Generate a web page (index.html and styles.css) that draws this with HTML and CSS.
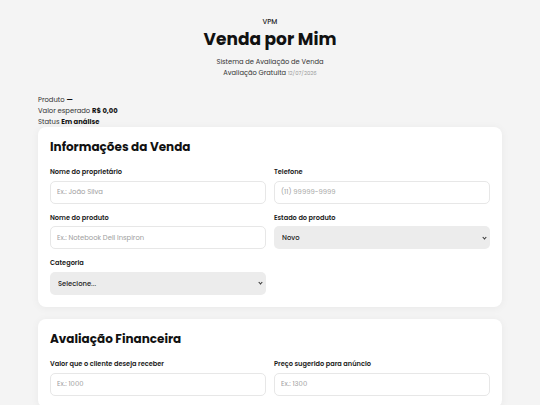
FILE: index.html
```html
<!DOCTYPE html>
<html lang="pt-BR">
<head>
<meta charset="utf-8">
<title>Venda por Mim</title>
<link rel="stylesheet" href="styles.css">
</head>
<body>
<div class="page">
  <header class="hero">
    <div class="brand">VPM</div>
    <h1 class="title">Venda por Mim</h1>
    <p class="subtitle first">Sistema de Avaliação de Venda</p>
    <p class="subtitle">Avaliação Gratuita <span class="date">12/07/2026</span></p>
  </header>

  <div class="summary">
    <div>Produto <b>—</b></div>
    <div>Valor esperado <b>R$ 0,00</b></div>
    <div>Status <b>Em análise</b></div>
  </div>

  <section class="card">
    <h2 class="card-title">Informações da Venda</h2>
    <div class="grid">
      <div class="field">
        <label class="label">Nome do proprietário</label>
        <input class="input" type="text" placeholder="Ex.: João Silva">
      </div>
      <div class="field">
        <label class="label">Telefone</label>
        <input class="input" type="text" placeholder="(11) 99999-9999">
      </div>
      <div class="field">
        <label class="label">Nome do produto</label>
        <input class="input" type="text" placeholder="Ex.: Notebook Dell Inspiron">
      </div>
      <div class="field">
        <label class="label">Estado do produto</label>
        <div class="select-wrap"><select class="select"><option>Novo</option></select></div>
      </div>
      <div class="field">
        <label class="label">Categoria</label>
        <div class="select-wrap"><select class="select"><option>Selecione...</option></select></div>
      </div>
    </div>
  </section>

  <section class="card">
    <h2 class="card-title">Avaliação Financeira</h2>
    <div class="grid">
      <div class="field">
        <label class="label">Valor que o cliente deseja receber</label>
        <input class="input" type="text" placeholder="Ex.: 1000">
      </div>
      <div class="field">
        <label class="label">Preço sugerido para anúncio</label>
        <input class="input" type="text" placeholder="Ex.: 1300">
      </div>
    </div>
  </section>
</div>
</body>
</html>
```

FILE: styles.css
```css
* { box-sizing: border-box; }
html, body { margin: 0; padding: 0; }
body {
  background: #f4f4f4;
  font-family: "Poppins", "Inter", "Noto Sans", sans-serif;
  color: #151515;
}
.page {
  width: 464px;
  margin: 0 auto;
}
.hero {
  text-align: center;
  padding-top: 17px;
}
.brand {
  font-size: 6.8px;
  line-height: 10px;
  font-weight: 500;
  color: #222;
}
.title {
  margin: 1px 0 0;
  font-size: 17px;
  line-height: 22px;
  font-weight: 700;
  color: #111;
}
.subtitle {
  margin: 0;
  font-size: 6.7px;
  line-height: 11px;
  color: #333;
}
.subtitle.first { margin-top: 6px; }
.date {
  font-size: 5.3px;
  color: #999;
}
.summary {
  margin-top: 15px;
  font-size: 6.8px;
  line-height: 11px;
  color: #333;
}
.summary b { color: #111; font-weight: 700; }
.card {
  background: #fff;
  border-radius: 8px;
  box-shadow: 0 1px 8px rgba(0,0,0,0.05);
  padding: 11px 12px 12.5px;
  margin-bottom: 12px;
}
.card-title {
  margin: 0 0 11px;
  font-size: 12px;
  line-height: 18px;
  font-weight: 700;
  color: #111;
}
.grid {
  display: grid;
  grid-template-columns: 1fr 1fr;
  column-gap: 8px;
  row-gap: 9px;
}
.field { display: flex; flex-direction: column; }
.label {
  font-size: 6.6px;
  line-height: 10px;
  font-weight: 600;
  color: #1a1a1a;
  margin-bottom: 3.5px;
}
.input, .select {
  height: 23px;
  border-radius: 5px;
  font-family: inherit;
  font-size: 6.8px;
  width: 100%;
  display: block;
}
.input {
  border: 1px solid #e7e7e7;
  background: #fff;
  padding: 0 6px;
  color: #222;
}
.input::placeholder { color: #a0a0a0; }
.select-wrap { position: relative; }
.select {
  -webkit-appearance: none;
  appearance: none;
  border: none;
  background: #ececec;
  padding: 0 8px;
  color: #222;
  font-weight: 500;
}
.select-wrap::after {
  content: "";
  position: absolute;
  right: 4px;
  top: 9.5px;
  width: 2px;
  height: 2px;
  border-right: 1px solid #333;
  border-bottom: 1px solid #333;
  transform: rotate(45deg);
}
```
